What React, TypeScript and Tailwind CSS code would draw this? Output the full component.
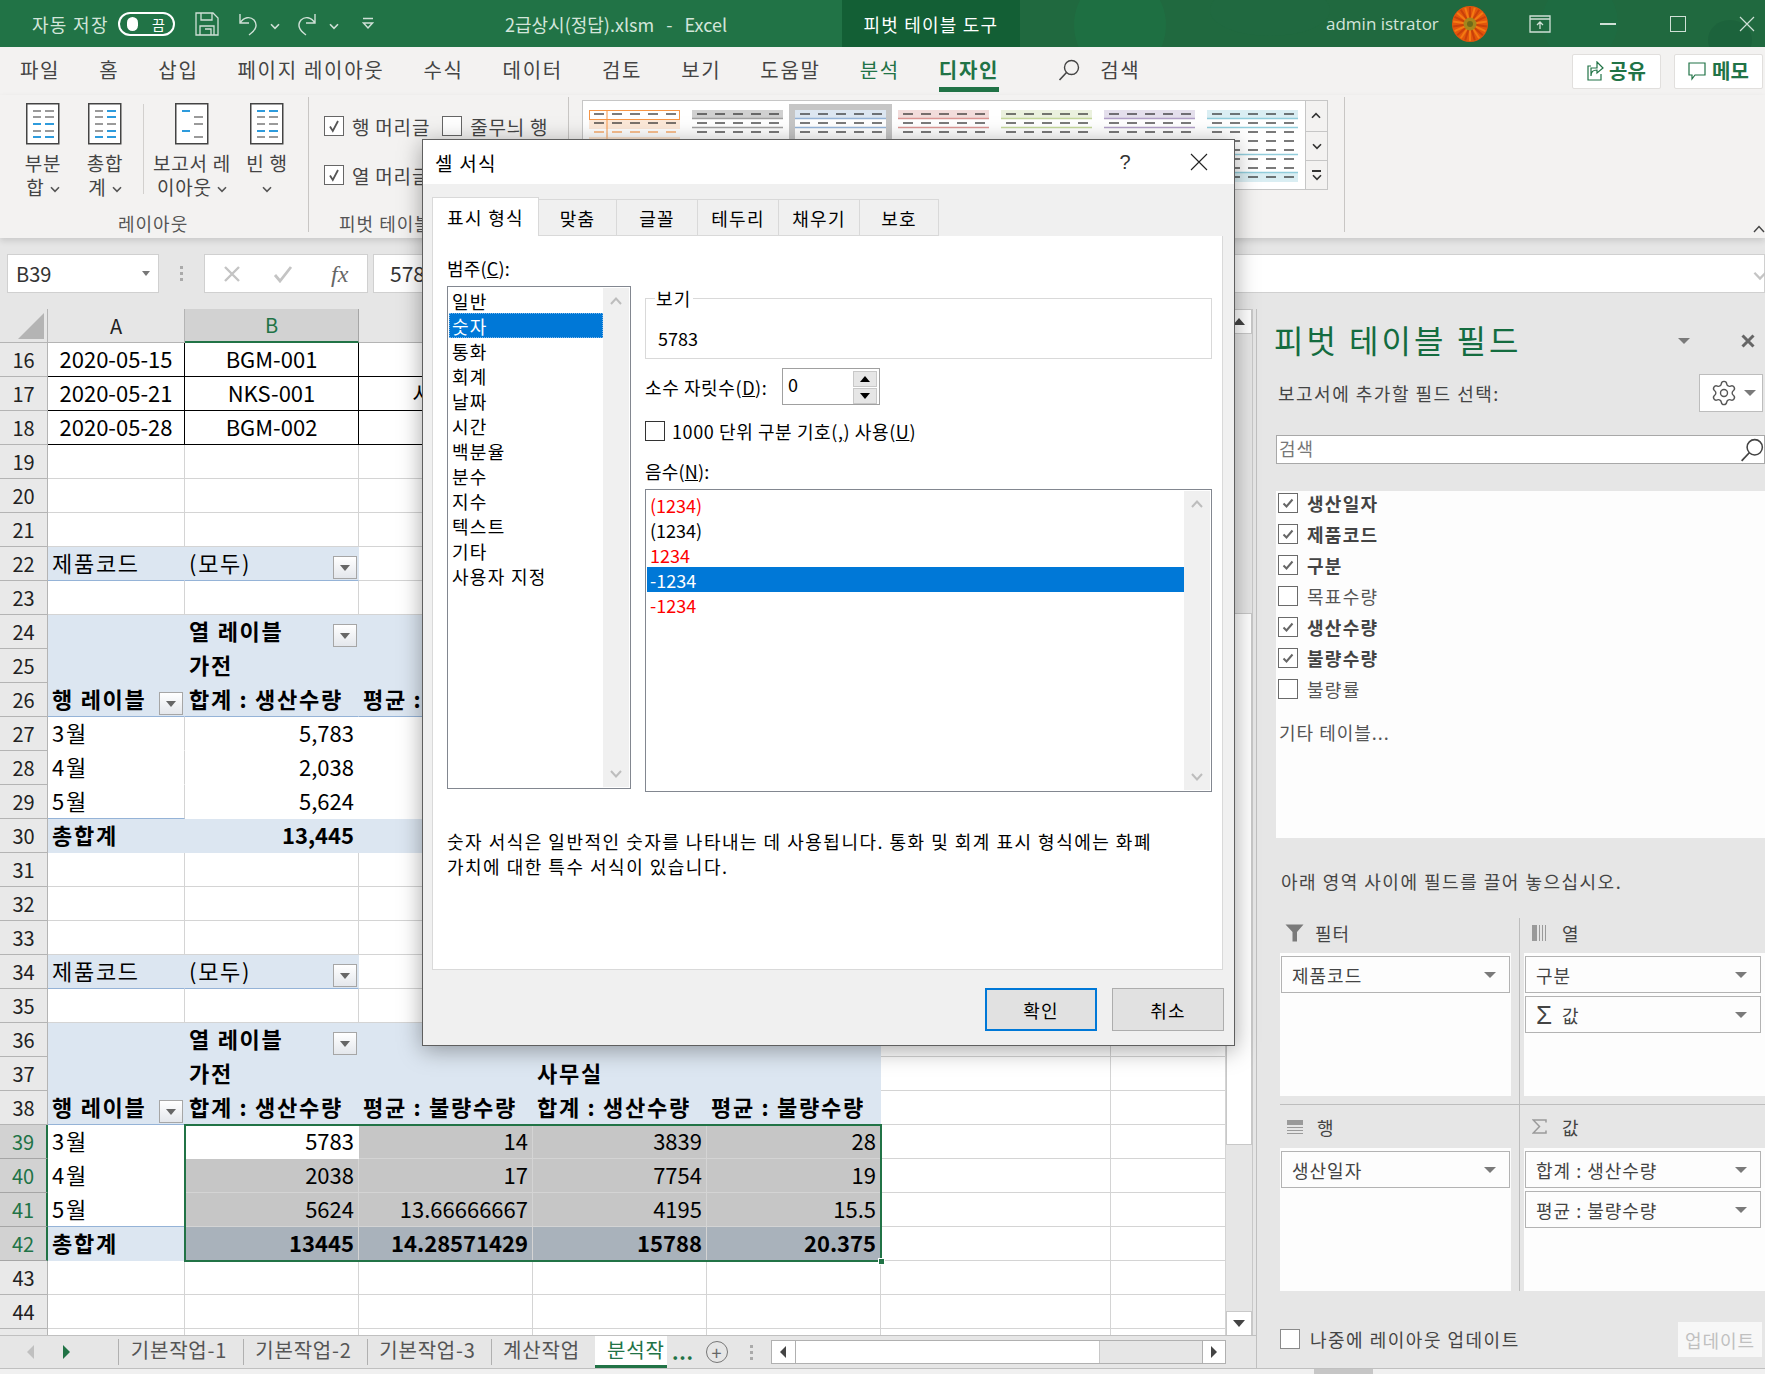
import { Settings } from "lucide-react"

const cells: Record<number, [string, string][]> = {}
const blueCell = "bg-[#dce6f1] border-[#dce6f1]"
const blueLine = "bg-[#dce6f1] border-r-[#dce6f1] border-b-[#95b3d7]"
const boldCell = "font-bold"
const gray = "bg-[#c6c6c6] border-[#c6c6c6] justify-end"
const total = "bg-[#a9b2bb] border-[#a9b2bb] justify-end font-bold"

function FilterBtn() {
  return (
    <span className="ml-auto mr-[-3px] self-end mb-[-2px] w-[24px] h-[23px] shrink-0 border border-[#a6a6a6] bg-gradient-to-b from-white to-[#e4e7ec] flex items-center justify-center">
      <span className="w-0 h-0 border-l-[5px] border-r-[5px] border-t-[6px] border-l-transparent border-r-transparent border-t-[#666]" />
    </span>
  )
}

const blank: [string, string] = ["", ""]
const boxRow = (a: string, b: string, c: string): [string, string][] => [
  [a, "justify-center border-black"],
  [b, "justify-center border-black"],
  [c, "justify-center border-black"],
  ["", "border-black"],
  ["", "border-black"],
  blank,
  blank,
]
cells[16] = boxRow("2020-05-15", "BGM-001", "")
cells[17] = boxRow("2020-05-21", "NKS-001", "사무실")
cells[18] = boxRow("2020-05-28", "BGM-002", "")

const pageRow: [string, string][] = [
  ["제품코드", blueLine],
  ["(모두)|f", blueLine],
  blank, blank, blank, blank, blank,
]
cells[22] = pageRow
cells[34] = pageRow

const pivot = (start: number, rowsData: string[][], totals: string[], plain: boolean) => {
  const fill = (t: string, extra: string): [string, string] => [t, `${blueCell} ${extra}`]
  cells[start] = [fill("", ""), fill("열 레이블|f", boldCell), fill("", ""), fill("", ""), fill("", ""), blank, blank]
  cells[start + 1] = [fill("", ""), fill("가전", boldCell), fill("", ""), fill("사무실", boldCell), fill("", ""), blank, blank]
  cells[start + 2] = [
    ["행 레이블|f", `${blueLine} font-bold`],
    ["합계 : 생산수량", `${blueLine} font-bold`],
    ["평균 : 불량수량", `${blueLine} font-bold`],
    ["합계 : 생산수량", `${blueLine} font-bold`],
    ["평균 : 불량수량", `${blueLine} font-bold`],
    blank,
    blank,
  ]
  rowsData.forEach((r, i) => {
    const last = i === rowsData.length - 1
    const line = last ? "border-b-[#95b3d7]" : "border-b-white"
    cells[start + 3 + i] = [
      [r[0], `border-r-[#d4d4d4] ${line}`],
      [r[1], plain ? "justify-end border-white" : i === 0 ? "justify-end bg-white border-white" : `${gray}`],
      [r[2], plain ? "justify-end border-white" : gray],
      [r[3], plain ? "justify-end border-white" : gray],
      [r[4], plain ? "justify-end border-white" : gray],
      blank,
      blank,
    ]
  })
  cells[start + 6] = [
    ["총합계", `${blueCell} font-bold`],
    [totals[0], plain ? `${blueCell} justify-end font-bold` : total],
    [totals[1], plain ? `${blueCell} justify-end font-bold` : total],
    [totals[2], plain ? `${blueCell} justify-end font-bold` : total],
    [totals[3], plain ? `${blueCell} justify-end font-bold` : total],
    blank,
    blank,
  ]
}
pivot(24, [["3월", "5,783", "14", "3,839", "28"], ["4월", "2,038", "17", "7,754", "19"], ["5월", "5,624", "14", "4,195", "16"]], ["13,445", "14", "15,788", "20"], true)
pivot(36, [["3월", "5783", "14", "3839", "28"], ["4월", "2038", "17", "7754", "19"], ["5월", "5624", "13.66666667", "4195", "15.5"]], ["13445", "14.28571429", "15788", "20.375"], false)

const rowNumbers = Array.from({ length: 30 }, (_, i) => i + 16)

function SheetRow({ n }: { n: number }) {
  const row = cells[n] || [blank, blank, blank, blank, blank, blank, blank]
  const selected = n >= 39 && n <= 42
  return (
    <div className="flex h-[34px]">
      <div className={selected
        ? "w-[48px] shrink-0 flex items-center justify-center text-[20px] bg-[#d2d2d2] text-[#217346] border-b border-[#a6a6a6] border-r-[2px] border-r-[#217346]"
        : "w-[48px] shrink-0 flex items-center justify-center text-[20px] bg-[#e9e9e9] text-[#222] border-b border-r border-[#b4b4b4]"}>
        {n < 45 ? n : ""}
      </div>
      <div className="grid grid-cols-[137px_174px_174px_174px_174px_230px_115px]">
        {row.map(([text, cls], i) => {
          const [label, flag] = text.split("|")
          const hangul = /[가-힣]/.test(label)
          return (
            <div key={i} className={`h-[34px] flex items-center whitespace-nowrap px-[4px] pb-[3px] border-r border-b border-[#d4d4d4] text-[22px] leading-none text-black ${hangul ? "tracking-[1.7px]" : "tracking-normal"} ${cls}`}>
              {label}
              {flag ? <FilterBtn /> : null}
            </div>
          )
        })}
      </div>
    </div>
  )
}

function LayoutIcon({ rows }: { rows: [number, string, string][] }) {
  return (
    <svg width="34" height="42" viewBox="0 0 34 42">
      <rect x="0.75" y="0.75" width="32" height="40" fill="#fff" stroke="#444" strokeWidth="1.5" />
      {rows.map(([y, a, b], i) => (
        <g key={i} strokeWidth="2">
          <line x1="7" x2="15" y1={y} y2={y} stroke={a} />
          <line x1="19" x2="28" y1={y} y2={y} stroke={b} />
        </g>
      ))}
    </svg>
  )
}

const bl = "#2e9bdc"
const gr = "#9a9a9a"

function Caret({ className }: { className?: string }) {
  return <span className={`w-0 h-0 border-l-[6px] border-r-[6px] border-t-[6px] border-l-transparent border-r-transparent border-t-[#7a7a7a] ${className || ""}`} />
}

function Chevron({ size = 10, color = "#555" }: { size?: number; color?: string }) {
  return (
    <svg width={size} height={size * 0.7} viewBox="0 0 10 7" className="inline-block">
      <path d="M1 1.2 5 5.4 9 1.2" fill="none" stroke={color} strokeWidth="1.6" />
    </svg>
  )
}

function RibbonButton({ width, lines, rows }: { width: string; lines: [string, string]; rows: [number, string, string][] }) {
  return (
    <div className={`${width} flex flex-col items-center pt-[6px] text-[19px] leading-[24px] tracking-[0.8px] text-[#444] whitespace-nowrap`}>
      <LayoutIcon rows={rows} />
      <span className="mt-[6px]">{lines[0]}</span>
      <span>
        {lines[1]} <Chevron />
      </span>
    </div>
  )
}

function RibbonCheck({ label, checked }: { label: string; checked?: boolean }) {
  return (
    <div className="flex items-center gap-[8px] text-[19px] leading-none tracking-[0.8px] text-[#444] whitespace-nowrap">
      <span className="w-[20px] h-[20px] border border-[#666] bg-white flex items-center justify-center">
        {checked ? (
          <svg width="14" height="14" viewBox="0 0 14 14">
            <path d="M3 7.5 5.8 12 11 2" fill="none" stroke="#555" strokeWidth="1.8" />
          </svg>
        ) : null}
      </span>
      {label}
    </div>
  )
}

function Swatch({ fill, line, selected }: { fill: string; line: string; selected?: boolean }) {
  return (
    <div className={selected ? "w-[103px] h-[84px] bg-[#c6c6c6] pl-[6px] pr-[6px] pt-[6px] -mt-[6px] shrink-0" : "w-[91px] mx-[6px] shrink-0"}>
      <svg width="91" height="72" viewBox="0 0 91 72" className="block">
        <rect x="0" y="0" width="91" height="72" fill="#fff" />
        <rect x="0" y="0" width="91" height="9" fill={fill} />
        <rect x="0" y="63" width="91" height="9" fill={fill} />
        {[9, 18, 45, 63].map((y) => (
          <line key={y} x1="0" x2="91" y1={y - 0.5} y2={y - 0.5} stroke={line} strokeWidth="1.5" />
        ))}
        {[4, 13, 22, 31, 40, 49, 58, 67].map((y) =>
          [5, 23, 41, 59, 77].map((x) => <line key={x} x1={x} x2={x + 10} y1={y} y2={y} stroke="#222" strokeWidth="1.2" />)
        )}
      </svg>
    </div>
  )
}

function OrangeSwatch() {
  return (
    <div className="w-[91px] mx-[6px] shrink-0">
      <svg width="91" height="72" viewBox="0 0 91 72" className="block">
        <rect x="0.5" y="0.5" width="90" height="9" fill="#fff" stroke="#f79646" />
        <rect x="0" y="10" width="91" height="9" fill="#fde9d9" />
        <line x1="18" x2="18" y1="0" y2="40" stroke="#f79646" />
        {[4, 13].map((y) => [5, 23, 41, 59, 77].map((x) => <line key={x} x1={x} x2={x + 10} y1={y} y2={y} stroke="#222" strokeWidth="1.2" />))}
        {[5, 23, 41, 59, 77].map((x) => <line key={x} x1={x} x2={x + 10} y1={22} y2={22} stroke="#f79646" strokeWidth="1.2" />)}
        <line x1="0" x2="91" y1="28" y2="28" stroke="#f9c9a0" />
      </svg>
    </div>
  )
}

function Flower() {
  const petals = Array.from({ length: 22 }, (_, i) => (i * 360) / 22)
  return (
    <svg width="36" height="36" viewBox="0 0 36 36" className="shrink-0">
      <circle cx="18" cy="18" r="18" fill="#e2560c" />
      {petals.map((a, i) => (
        <line key={a} x1="18" y1="18" x2="18" y2="1" stroke={i % 2 ? "#f47a12" : "#c9400a"} strokeWidth="2" transform={`rotate(${a} 18 18)`} />
      ))}
      <circle cx="18" cy="18" r="6.5" fill="#a5861c" />
      <circle cx="18" cy="18" r="3" fill="#6f6a1a" />
    </svg>
  )
}

function SearchGlyph({ size = 22, color = "#444" }: { size?: number; color?: string }) {
  return (
    <svg width={size} height={size} viewBox="0 0 22 22">
      <circle cx="13.5" cy="8.5" r="7" fill="none" stroke={color} strokeWidth="1.4" />
      <line x1="8.5" y1="13.5" x2="1.5" y2="21" stroke={color} strokeWidth="1.6" />
    </svg>
  )
}

function FieldCheck({ label, checked }: { label: string; checked?: boolean }) {
  return (
    <div className="h-[31px] flex items-center pl-[2px] gap-[9px]">
      <span className="w-[20px] h-[20px] border-[1.5px] border-[#6a6a6a] bg-white flex items-center justify-center">
        {checked ? (
          <svg width="14" height="14" viewBox="0 0 14 14">
            <path d="M2.5 7.5 5.5 10.5 11.5 3.5" fill="none" stroke="#666" strokeWidth="2" />
          </svg>
        ) : null}
      </span>
      <span className={checked ? "text-[18px] leading-none tracking-[1.3px] font-bold text-[#444]" : "text-[18px] leading-none tracking-[1.3px] text-[#555]"}>{label}</span>
    </div>
  )
}

function AreaItem({ children, wide }: { children: React.ReactNode; wide?: boolean }) {
  return (
    <div className={`${wide ? "w-[236px] ml-[1px]" : "w-[229px] ml-[1px]"} h-[37px] mb-[3px] border border-[#b3b3b3] bg-[#fdfdfd] flex items-center pl-[10px] pr-[13px] text-[18px] leading-none tracking-[1px] text-[#444]`}>
      {children}
      <Caret className="ml-auto" />
    </div>
  )
}

function AreaHead({ icon, label, className }: { icon: React.ReactNode; label: string; className: string }) {
  return (
    <div className={`flex items-center text-[18px] leading-none tracking-[1px] text-[#444] ${className}`}>
      <span className="w-[30px] flex justify-start">{icon}</span>
      {label}
    </div>
  )
}

const funnel = (
  <svg width="19" height="18" viewBox="0 0 19 18">
    <path d="M0.5 0.5h18L12 8v9.5H7.5V8z" fill="#7a7a7a" />
  </svg>
)
const colsGlyph = (
  <svg width="14" height="16" viewBox="0 0 14 16">
    <rect x="0" y="0" width="5" height="16" fill="#9a9a9a" />
    <rect x="7" y="0" width="1" height="16" fill="#9a9a9a" />
    <rect x="10" y="0" width="1" height="16" fill="#9a9a9a" />
    <rect x="13" y="0" width="1" height="16" fill="#9a9a9a" />
  </svg>
)
const rowsGlyph = (
  <svg width="16" height="14" viewBox="0 0 16 14">
    <rect x="0" y="0" width="16" height="5" fill="#9a9a9a" />
    <rect x="0" y="7" width="16" height="1" fill="#9a9a9a" />
    <rect x="0" y="10" width="16" height="1" fill="#9a9a9a" />
    <rect x="0" y="13" width="16" height="1" fill="#9a9a9a" />
  </svg>
)
const sigmaGlyph = (
  <svg width="15" height="15" viewBox="0 0 15 15">
    <path d="M14 3.5V1H1.2L7.5 7.5 1.2 14H14v-2.5" fill="none" stroke="#9a9a9a" strokeWidth="1.5" />
  </svg>
)

const categories = ["일반", "숫자", "통화", "회계", "날짜", "시간", "백분율", "분수", "지수", "텍스트", "기타", "사용자 지정"]
const negatives: [string, string][] = [
  ["(1234)", "text-[#ff0000]"],
  ["(1234)", "text-black"],
  ["1234", "text-[#ff0000]"],
  ["-1234", "bg-[#0078d7] text-white"],
  ["-1234", "text-[#ff0000]"],
]

function ListScroll() {
  return (
    <div className="absolute right-[1px] top-[1px] bottom-[1px] w-[26px] bg-[#f0f0f0] flex flex-col items-center justify-between py-[9px]">
      <svg width="12" height="8" viewBox="0 0 12 8"><path d="M1 7 6 1.5 11 7" fill="none" stroke="#bdbdbd" strokeWidth="2" /></svg>
      <svg width="12" height="8" viewBox="0 0 12 8"><path d="M1 1 6 6.5 11 1" fill="none" stroke="#bdbdbd" strokeWidth="2" /></svg>
    </div>
  )
}

function Dialog() {
  return (
    <div className="absolute z-20 left-[422px] top-[139px] w-[813px] h-[907px] bg-[#f0f0f0] border border-[#5f5f5f] shadow-[0_4px_22px_rgba(0,0,0,0.35)] text-black tracking-[1.3px]">
      <div className="h-[44px] bg-white flex items-center pl-[12px] pr-[26px]">
        <span className="text-[19px] leading-none">셀 서식</span>
        <span className="ml-auto text-[20px] leading-none text-[#333] [font-family:'Liberation_Sans',sans-serif]">?</span>
        <svg width="18" height="18" viewBox="0 0 18 18" className="ml-[58px]"><path d="M1 1 17 17M17 1 1 17" stroke="#222" strokeWidth="1.1" /></svg>
      </div>
      <div className="flex pl-[9px] pt-[13px] h-[52px] items-end">
        <div className="w-[107px] h-[39px] bg-white border border-b-0 border-[#d9d9d9] flex items-center justify-center text-[18px] leading-none">표시 형식</div>
        {[["맞춤", "w-[78px]"], ["글꼴", "w-[81px]"], ["테두리", "w-[81px]"], ["채우기", "w-[81px]"], ["보호", "w-[79px]"]].map(([t, w]) => (
          <div key={t} className={`${w} h-[37px] border border-l-0 border-[#d9d9d9] flex items-center justify-center text-[18px] leading-none`}>{t}</div>
        ))}
      </div>
      <div className="ml-[9px] w-[791px] h-[734px] bg-white border border-t-0 border-[#d9d9d9] pl-[14px]">
        <div className="flex">
          <div className="w-[184px] shrink-0">
            <div className="pt-[20px] h-[50px] text-[18px] leading-[24px] tracking-[0.2px]">범주(<span className="underline">C</span>):</div>
            <div className="relative h-[503px] border border-[#828790]">
              <div className="pt-[1px] pl-[1px] w-[155px]">
                {categories.map((c, i) => (
                  <div key={c} className={i === 1 ? "h-[25px] pl-[3px] flex items-center text-[18px] leading-none bg-[#0078d7] text-white outline-1 outline-dotted outline-[#7fb8ea] -outline-offset-1" : "h-[25px] pl-[3px] flex items-center text-[18px] leading-none"}>{c}</div>
                ))}
              </div>
              <ListScroll />
            </div>
          </div>
          <div className="ml-[14px] w-[567px] pt-[62px]">
            <div className="relative h-[61px] border border-[#d9d9d9] pt-[27px] pl-[12px] text-[18px] leading-[24px] tracking-normal">
              <span className="absolute left-[9px] -top-[13px] bg-white px-[1px] leading-[24px] tracking-[1.3px]">보기</span>
              5783
            </div>
            <div className="flex items-center mt-[9px] h-[37px] text-[18px] leading-none tracking-[0.6px]">
              <span className="w-[137px] whitespace-nowrap">소수 자릿수(<span className="underline">D</span>):</span>
              <div className="w-[98px] h-[37px] border border-[#a0a0a0] bg-white flex pl-[5px] pt-[2px] pr-[2px]">
                <span className="leading-[26px]">0</span>
                <div className="ml-auto flex flex-col gap-[1px]">
                  <span className="w-[24px] h-[16px] bg-[#e6e6e6] border border-[#c8c8c8] flex items-center justify-center">
                    <span className="w-0 h-0 border-l-[5px] border-r-[5px] border-b-[6px] border-l-transparent border-r-transparent border-b-black" />
                  </span>
                  <span className="w-[24px] h-[16px] bg-[#e6e6e6] border border-[#c8c8c8] flex items-center justify-center">
                    <span className="w-0 h-0 border-l-[5px] border-r-[5px] border-t-[6px] border-l-transparent border-r-transparent border-t-black" />
                  </span>
                </div>
              </div>
            </div>
            <div className="flex items-center mt-[16px] h-[20px] gap-[7px] text-[18px] leading-none tracking-[0.6px]">
              <span className="w-[20px] h-[20px] border border-[#333]" />
              <span>1000 단위 구분 기호(<span className="underline">,</span>) 사용(<span className="underline">U</span>)</span>
            </div>
            <div className="mt-[18px] h-[24px] text-[18px] leading-[24px] tracking-[0.2px]">음수(<span className="underline">N</span>):</div>
            <div className="relative mt-[6px] h-[303px] border border-[#828790] pt-[2px] pl-[1px] tracking-normal">
              <div className="w-[537px]">
                {negatives.map(([t, c], i) => (
                  <div key={i} className={`h-[25px] pl-[3px] flex items-center text-[18px] leading-none ${c}`}>{t}</div>
                ))}
              </div>
              <ListScroll />
            </div>
          </div>
        </div>
        <div className="mt-[37px] text-[18px] leading-[25px] tracking-[1.5px] whitespace-nowrap">
          <div>숫자 서식은 일반적인 숫자를 나타내는 데 사용됩니다. 통화 및 회계 표시 형식에는 화폐</div>
          <div>가치에 대한 특수 서식이 있습니다.</div>
        </div>
      </div>
      <div className="flex justify-end gap-[15px] pt-[18px] pr-[10px]">
        <button className="w-[112px] h-[43px] bg-[#e1e1e1] border-[2.5px] border-[#0078d7] text-[18px] leading-none">확인</button>
        <button className="w-[112px] h-[43px] bg-[#e1e1e1] border border-[#adadad] text-[18px] leading-none">취소</button>
      </div>
    </div>
  )
}

export default function App() {
  return (
    <div className="relative w-[1765px] h-[1374px] overflow-hidden bg-[#e6e6e6] [font-family:'Noto_Sans_CJK_KR','Noto_Sans',sans-serif]">
      {/* title bar */}
      <div className="relative h-[47px] bg-[#217346] flex items-center text-[#d3e5da] overflow-hidden">
        <div className="flex items-center pl-[32px] w-[505px] shrink-0">
          <span className="text-[18px] leading-none tracking-[1.3px]">자동 저장</span>
          <span className="ml-[9px] w-[57px] h-[24px] rounded-full border-2 border-white flex items-center pl-[7px] pr-[8px] text-white">
            <span className="w-[11px] h-[14px] rounded-full bg-white" />
            <span className="ml-auto text-[14px] leading-none">끔</span>
          </span>
          <svg width="24" height="24" viewBox="0 0 24 24" className="ml-[20px]">
            <path d="M1 1h17l5 5v17H1zM6 1v7h11V1M5 23V14h14v9M10 17h6v6" fill="none" stroke="#cfe0d6" strokeWidth="1.3" />
          </svg>
          <svg width="22" height="24" viewBox="0 0 22 24" className="ml-[19px]">
            <path d="M2 2v9h9M2 11C6 5 12 4 16 8c4 5 2 10-5 15" fill="none" stroke="#cfe0d6" strokeWidth="1.4" />
          </svg>
          <span className="ml-[10px]"><Chevron color="#cfe0d6" /></span>
          <svg width="22" height="24" viewBox="0 0 22 24" className="ml-[15px]">
            <path d="M20 2v9h-9M20 11C16 5 10 4 6 8c-4 5-2 10 5 15" fill="none" stroke="#cfe0d6" strokeWidth="1.4" />
          </svg>
          <span className="ml-[12px]"><Chevron color="#cfe0d6" /></span>
          <svg width="12" height="14" viewBox="0 0 12 14" className="ml-[23px]">
            <path d="M1 1.5h10M1.5 6l4.5 5 4.5-5z" fill="none" stroke="#cfe0d6" strokeWidth="1.5" />
          </svg>
        </div>
        <span className="text-[18px] leading-none w-[337px] shrink-0 whitespace-pre">2급상시(정답).xlsm   -   Excel</span>
        <div className="w-[178px] h-full bg-[#135f35] text-white flex items-center justify-center text-[18px] leading-none tracking-[1.2px] shrink-0">피벗 테이블 도구</div>
        <div className="relative flex-1 h-full bg-[#20693f] flex items-center pl-[306px]">
          <svg width="746" height="47" viewBox="0 0 746 47" className="absolute left-0 top-0">
            <ellipse cx="100" cy="25" rx="46" ry="50" fill="#1e7a49" opacity="0.35" />
            <ellipse cx="250" cy="10" rx="60" ry="26" fill="#1f6a41" opacity="0.5" />
            <ellipse cx="560" cy="22" rx="38" ry="40" fill="#1d6e43" opacity="0.55" />
            <ellipse cx="710" cy="40" rx="22" ry="20" fill="#1b5f3a" opacity="0.6" />
          </svg>
          <span className="relative text-[17px] leading-none whitespace-nowrap [font-family:'Open_Sans',sans-serif]">admin istrator</span>
          <span className="relative ml-[13px]"><Flower /></span>
          <svg width="22" height="18" viewBox="0 0 22 18" className="relative ml-[41px]">
            <path d="M1 1h20v16H1zM1 4h20M11 14V7M8 10l3-3 3 3" fill="none" stroke="#cfe0d6" strokeWidth="1.3" />
          </svg>
          <span className="relative ml-[49px] w-[16px] h-[2px] bg-[#cfe0d6]" />
          <span className="relative ml-[54px] w-[16px] h-[16px] border-[1.3px] border-[#cfe0d6]" />
          <svg width="16" height="16" viewBox="0 0 16 16" className="relative ml-[53px]"><path d="M1 1 15 15M15 1 1 15" stroke="#cfe0d6" strokeWidth="1.2" /></svg>
        </div>
      </div>

      {/* ribbon tabs */}
      <div className="h-[48px] bg-[#f3f2f1] flex items-center pl-[20px] pb-[3px] gap-[39px] text-[20px] leading-none tracking-[1.7px] text-[#444] whitespace-nowrap">
        <span>파일</span>
        <span>홈</span>
        <span>삽입</span>
        <span>페이지 레이아웃</span>
        <span>수식</span>
        <span>데이터</span>
        <span>검토</span>
        <span>보기</span>
        <span>도움말</span>
        <span className="text-[#217346]">분석</span>
        <span className="relative font-bold text-[#217346]">
          디자인
          <span className="absolute left-0 right-0 top-[27px] h-[5px] bg-[#217346]" />
        </span>
        <span className="flex items-center gap-[20px] ml-[20px]">
          <SearchGlyph />
          검색
        </span>
        <span className="ml-auto flex gap-[13px] pr-[2px] mb-[-3px] font-bold tracking-normal text-[#217346]">
          <span className="w-[89px] h-[35px] bg-white border border-[#e1dfdd] rounded-[2px] flex items-center justify-center gap-[4px]">
            <svg width="18" height="20" viewBox="0 0 18 20"><path d="M10 1l6 6-6 5V9C6 9 4 11 4 15V7h6zM4 5H1v14h13v-6" fill="none" stroke="#217346" strokeWidth="1.2" /></svg>
            공유
          </span>
          <span className="w-[89px] h-[35px] bg-white border border-[#e1dfdd] rounded-[2px] flex items-center justify-center gap-[6px]">
            <svg width="18" height="20" viewBox="0 0 18 20"><path d="M1 2h16v12H7l-3 4v-4H1z" fill="none" stroke="#217346" strokeWidth="1.2" /></svg>
            메모
          </span>
        </span>
      </div>

      {/* ribbon body */}
      <div className="relative h-[143px] bg-[#f3f2f1] flex shadow-[0_3px_6px_rgba(0,0,0,0.12)] z-10">
        <div className="w-[309px] h-[135px] mt-[2px] border-r border-[#c8c6c4] flex flex-col">
          <div className="flex pl-[12px]">
            <RibbonButton width="w-[62px]" lines={["부분", "합"]} rows={[[8, gr, gr], [14, gr, gr], [21, bl, bl], [28, gr, gr], [34, bl, bl]]} />
            <RibbonButton width="w-[62px]" lines={["총합", "계"]} rows={[[8, gr, bl], [14, gr, bl], [21, gr, gr], [28, gr, bl], [34, bl, bl]]} />
            <div className="w-[1px] h-[90px] bg-[#d2d0ce] ml-[7px] mt-[7px]" />
            <RibbonButton width="w-[96px]" lines={["보고서 레", "이아웃"]} rows={[[8, bl, "#fff"], [14, "#fff", gr], [21, "#fff", gr], [28, bl, "#fff"], [34, "#fff", gr]]} />
            <RibbonButton width="w-[54px]" lines={["빈 행", ""]} rows={[[8, bl, bl], [14, gr, gr], [21, gr, gr], [28, bl, bl], [34, gr, gr]]} />
          </div>
          <div className="mt-auto pl-[118px] text-[18px] leading-none tracking-[1px] text-[#555]">레이아웃</div>
        </div>
        <div className="w-[260px] h-[135px] mt-[2px] border-r border-[#c8c6c4] flex flex-col pl-[15px] pt-[19px]">
          <div className="flex gap-[12px]">
            <RibbonCheck label="행 머리글" checked />
            <RibbonCheck label="줄무늬 행" />
          </div>
          <div className="mt-[29px]"><RibbonCheck label="열 머리글" checked /></div>
          <div className="mt-auto pl-[15px] text-[18px] leading-none tracking-[1px] text-[#555] whitespace-nowrap">피벗 테이블 스타일 옵션</div>
        </div>
        <div className="ml-[13px] mt-[5px] w-[723px] h-[90px] bg-white border border-[#c6c6c6] border-r-0 flex pt-[9px] overflow-hidden">
          <OrangeSwatch />
          <Swatch fill="#d0d0d0" line="#a0a0a0" />
          <Swatch fill="#dce6f1" line="#95b3d7" selected />
          <Swatch fill="#f2dcdb" line="#da9694" />
          <Swatch fill="#ebf1de" line="#c4d79b" />
          <Swatch fill="#e4dfec" line="#b1a0c7" />
          <Swatch fill="#daeef3" line="#92cddc" />
        </div>
        <div className="mt-[5px] w-[23px] h-[90px] flex flex-col gap-[1px] border border-[#c6c6c6] bg-[#c6c6c6]">
          <span className="h-[30px] bg-[#f3f2f1] flex items-center justify-center rotate-180"><Chevron color="#333" /></span>
          <span className="h-[28px] bg-[#f3f2f1] flex items-center justify-center"><Chevron color="#333" /></span>
          <span className="flex-1 bg-[#f3f2f1] flex flex-col items-center justify-center gap-[2px]">
            <span className="w-[9px] h-[2px] bg-[#333]" />
            <Chevron color="#333" />
          </span>
        </div>
        <div className="ml-[16px] w-[1px] h-[135px] mt-[2px] bg-[#c8c6c4]" />
        <svg width="12" height="8" viewBox="0 0 12 8" className="absolute right-0 top-[130px]"><path d="M1 7 6 1.5 11 7" fill="none" stroke="#444" strokeWidth="1.4" /></svg>
      </div>

      {/* formula bar */}
      <div className="h-[71px] bg-[#e6e6e6] flex pt-[16px] pb-[16px]">
        <div className="ml-[7px] w-[152px] h-[39px] bg-white border border-[#d0d0d0] flex items-center pl-[8px] pr-[8px] text-[20px] leading-none text-[#333]">
          B39
          <span className="ml-auto w-0 h-0 border-l-[4px] border-r-[4px] border-t-[5px] border-l-transparent border-r-transparent border-t-[#777]" />
        </div>
        <div className="w-[45px] flex flex-col items-center justify-center gap-[3px]">
          <span className="w-[3px] h-[3px] bg-[#aaa]" />
          <span className="w-[3px] h-[3px] bg-[#aaa]" />
          <span className="w-[3px] h-[3px] bg-[#aaa]" />
        </div>
        <div className="w-[164px] h-[39px] bg-white border border-[#d0d0d0] flex items-center pl-[18px] gap-[32px]">
          <svg width="18" height="18" viewBox="0 0 18 18"><path d="M2 2 16 16M16 2 2 16" stroke="#c4c4c4" strokeWidth="2.4" /></svg>
          <svg width="20" height="18" viewBox="0 0 20 18"><path d="M2 10 7 16 18 2" fill="none" stroke="#c4c4c4" strokeWidth="2.8" /></svg>
          <span className="ml-[6px] text-[24px] leading-none italic text-[#666] [font-family:'Liberation_Serif',serif]">fx</span>
        </div>
        <div className="ml-[5px] flex-1 h-[39px] bg-white border border-[#d0d0d0] flex items-center pl-[16px] text-[21px] leading-none text-[#333]">
          5783
          <span className="ml-auto mr-[-3px]"><Chevron size={14} color="#c4c4c4" /></span>
        </div>
      </div>

      {/* main */}
      <div className="flex h-[1060px]">
        <div className="w-[1256px] shrink-0 flex flex-col">
          <div className="flex h-[1026px]">
            <div className="w-[1226px] shrink-0 overflow-hidden bg-white">
              <div className="flex h-[34px]">
                <div className="w-[48px] h-full bg-[#e6e6e6] border-r border-b border-[#b4b4b4] relative shrink-0">
                  <svg width="26" height="26" viewBox="0 0 26 26" className="absolute right-[3px] bottom-[3px]"><path d="M26 0v26H0z" fill="#b4b4b4" /></svg>
                </div>
                <div className="grid grid-cols-[137px_174px_174px_174px_174px_230px_115px] text-[20px] leading-none text-[#222]">
                  <div className="flex items-center justify-center bg-[#e6e6e6] border-r border-b border-[#b4b4b4]">A</div>
                  <div className="flex items-center justify-center bg-[#d2d2d2] border-r border-[#a6a6a6] border-b-[2px] border-b-[#217346] text-[#217346]">B</div>
                  {["C", "D", "E", "F", "G"].map((c) => (
                    <div key={c} className="flex items-center justify-center bg-[#e6e6e6] border-r border-b border-[#b4b4b4]">{c}</div>
                  ))}
                </div>
              </div>
              <div className="relative">
                {rowNumbers.map((n) => (
                  <SheetRow key={n} n={n} />
                ))}
                <span className="absolute left-[184px] top-[781px] w-[698px] h-[138px] border-[2.5px] border-[#217346]" />
                <span className="absolute left-[878px] top-[915px] w-[7px] h-[7px] bg-[#217346] border border-white" />
              </div>
            </div>
            <div className="w-[27px] shrink-0 bg-[#e6e6e6] border-r border-[#c8c8c8] flex flex-col">
              <span className="h-[25px] bg-white border border-[#c8c8c8] flex items-center justify-center">
                <span className="w-0 h-0 border-l-[6px] border-r-[6px] border-b-[7px] border-l-transparent border-r-transparent border-b-[#444]" />
              </span>
              <span className="mt-[279px] h-[532px] bg-white border border-[#c8c8c8]" />
              <span className="mt-auto mb-[-1px] h-[25px] bg-white border border-[#c8c8c8] flex items-center justify-center">
                <span className="w-0 h-0 border-l-[6px] border-r-[6px] border-t-[7px] border-l-transparent border-r-transparent border-t-[#444]" />
              </span>
            </div>
            <div className="w-[3px] bg-[#e6e6e6]" />
          </div>
          <div className="relative h-[34px] bg-[#e6e6e6] border-t border-b border-[#c0c0c0] flex items-center text-[20px] leading-none tracking-[0.8px] text-[#555] whitespace-nowrap">
            <span className="ml-[27px] w-0 h-0 border-t-[7px] border-b-[7px] border-r-[7px] border-t-transparent border-b-transparent border-r-[#c0c0c0]" />
            <span className="ml-[29px] w-0 h-0 border-t-[7px] border-b-[7px] border-l-[7px] border-t-transparent border-b-transparent border-l-[#217346]" />
            <div className="ml-[48px] flex h-full">
              {[["기본작업-1", "w-[125px]"], ["기본작업-2", "w-[124px]"], ["기본작업-3", "w-[124px]"], ["계산작업", "w-[104px]"]].map(([t, w]) => (
                <div key={t} className={`${w} border-l border-[#b0b0b0] my-[3px] pb-[5px] pr-[4px] flex items-center justify-center`}>{t}</div>
              ))}
              <div className="relative w-[72px] bg-white text-[#217346] flex items-center pl-[12px] pb-[5px]">
                분석작
                <span className="absolute left-0 right-0 bottom-0 h-[3px] bg-[#217346]" />
              </div>
            </div>
            <span className="ml-[5px] font-bold text-[#217346] leading-[10px]">...</span>
            <span className="ml-[12px] w-[22px] h-[22px] rounded-full border-[1.5px] border-[#777] flex items-center justify-center text-[18px] leading-none text-[#666]">+</span>
            <div className="ml-[22px] flex flex-col gap-[3px]">
              <span className="w-[3px] h-[3px] bg-[#aaa]" />
              <span className="w-[3px] h-[3px] bg-[#aaa]" />
              <span className="w-[3px] h-[3px] bg-[#aaa]" />
            </div>
            <div className="ml-[18px] w-[455px] h-[24px] bg-[#e6e6e6] border border-[#b0b0b0] flex">
              <span className="w-[24px] bg-white border-r border-[#b0b0b0] flex items-center justify-center">
                <span className="w-0 h-0 border-t-[6px] border-b-[6px] border-r-[6px] border-t-transparent border-b-transparent border-r-[#444]" />
              </span>
              <span className="w-[304px] bg-white border-r border-[#c8c8c8]" />
              <span className="ml-auto w-[23px] bg-white border-l border-[#b0b0b0] flex items-center justify-center">
                <span className="w-0 h-0 border-t-[6px] border-b-[6px] border-l-[6px] border-t-transparent border-b-transparent border-l-[#444]" />
              </span>
            </div>
          </div>
        </div>

        {/* pivot pane */}
        <div className="flex-1 min-w-0 bg-[#e6e6e6] border-l border-[#c0c0c0] border-b text-[#444]">
          <div className="h-[63px] flex items-center pl-[17px] pr-[10px]">
            <span className="pb-[4px] text-[32px] leading-none tracking-[3px] text-[#146c3f] whitespace-nowrap">피벗 테이블 필드</span>
            <Caret className="ml-auto mr-[51px]" />
            <svg width="14" height="14" viewBox="0 0 14 14"><path d="M1.5 1.5 12.5 12.5M12.5 1.5 1.5 12.5" stroke="#666" strokeWidth="3" /></svg>
          </div>
          <div className="h-[42px] flex items-center pl-[21px] pr-[2px] text-[18px] leading-none tracking-[1.5px]">
            <span>보고서에 추가할 필드 선택:</span>
            <span className="ml-auto w-[64px] h-[38px] bg-white border border-[#bdbdbd] flex items-center pl-[10px] gap-[6px]">
              <Settings size={28} strokeWidth={1.2} color="#555" />
              <Caret />
            </span>
          </div>
          <div className="ml-[19px] mt-[21px] h-[29px] bg-white border border-[#a8a8a8] flex items-center pl-[2px] text-[18px] leading-none tracking-[1px] text-[#777]">
            <span className="pb-[3px]">검색</span>
            <span className="ml-auto"><SearchGlyph size={24} /></span>
          </div>
          <div className="ml-[19px] mt-[27px] h-[347px] bg-[#fdfdfd] overflow-hidden">
            <div className="-mt-[4px]">
              <FieldCheck label="생산일자" checked />
              <FieldCheck label="제품코드" checked />
              <FieldCheck label="구분" checked />
              <FieldCheck label="목표수량" />
              <FieldCheck label="생산수량" checked />
              <FieldCheck label="불량수량" checked />
              <FieldCheck label="불량률" />
              <div className="pl-[3px] mt-[15px] text-[18px] leading-[26px] tracking-[1px] text-[#555]">기타 테이블...</div>
            </div>
          </div>
          <div className="h-[80px] pl-[24px] pt-[6px] flex items-center text-[18px] leading-none tracking-[1.5px]">아래 영역 사이에 필드를 끌어 놓으십시오.</div>
          <div className="ml-[23px] grid grid-cols-[240px_245px]">
            <div className="border-r border-b border-[#bdbdbd] h-[187px]">
              <AreaHead icon={funnel} label="필터" className="h-[35px] pl-[5px] pb-[6px]" />
              <div className="w-[231px] h-[143px] bg-[#fdfdfd] pt-[3px]">
                <AreaItem>제품코드</AreaItem>
              </div>
            </div>
            <div className="border-b border-[#bdbdbd] h-[187px] pl-[4px]">
              <AreaHead icon={colsGlyph} label="열" className="h-[35px] pl-[8px] pb-[6px]" />
              <div className="h-[143px] bg-[#fdfdfd] pt-[3px]">
                <AreaItem wide>구분</AreaItem>
                <AreaItem wide><span className="text-[26px] leading-none mr-[9px] [font-family:'Liberation_Sans',sans-serif]">Σ</span>값</AreaItem>
              </div>
            </div>
            <div className="border-r border-[#bdbdbd] h-[186px]">
              <AreaHead icon={rowsGlyph} label="행" className="h-[43px] pl-[7px]" />
              <div className="w-[231px] h-[143px] bg-[#fdfdfd] pt-[3px]">
                <AreaItem>생산일자</AreaItem>
              </div>
            </div>
            <div className="h-[186px] pl-[4px]">
              <AreaHead icon={sigmaGlyph} label="값" className="h-[43px] pl-[8px]" />
              <div className="h-[143px] bg-[#fdfdfd] pt-[3px]">
                <AreaItem wide>합계 : 생산수량</AreaItem>
                <AreaItem wide>평균 : 불량수량</AreaItem>
              </div>
            </div>
          </div>
          <div className="ml-[23px] mt-[31px] flex items-start pr-[3px]">
            <span className="mt-[7px] w-[20px] h-[20px] bg-white border-[1.5px] border-[#8a8a8a]" />
            <span className="ml-[10px] mt-[8px] text-[18px] leading-none tracking-[1.5px]">나중에 레이아웃 업데이트</span>
            <span className="ml-auto w-[84px] h-[35px] bg-[#f7f7f7] flex items-center justify-center text-[18px] leading-none tracking-[1px] text-[#c0c0c0]">업데이트</span>
          </div>
        </div>
      </div>
      <div className="h-[5px] bg-[#f0f0f0] pl-[1314px]">
        <div className="w-[59px] h-full bg-[#c6c6c6]" />
      </div>

      <Dialog />
    </div>
  )
}
